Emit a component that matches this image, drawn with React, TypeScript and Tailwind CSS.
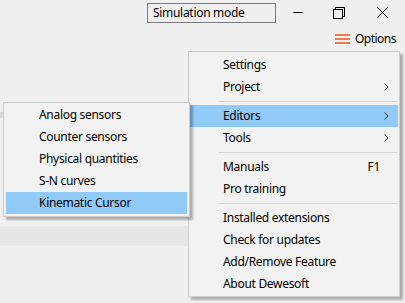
import { ReactNode } from 'react';

type Item = { label: string; arrow?: boolean; shortcut?: string; active?: boolean } | 'sep';

const mainItems: Item[] = [
  { label: 'Settings' },
  { label: 'Project', arrow: true },
  'sep',
  { label: 'Editors', arrow: true, active: true },
  { label: 'Tools', arrow: true },
  'sep',
  { label: 'Manuals', shortcut: 'F1' },
  { label: 'Pro training' },
  'sep',
  { label: 'Installed extensions' },
  { label: 'Check for updates' },
  { label: 'Add/Remove Feature' },
  { label: 'About Dewesoft' },
];

const editorItems: Item[] = [
  { label: 'Analog sensors' },
  { label: 'Counter sensors' },
  { label: 'Physical quantities' },
  { label: 'S-N curves' },
  { label: 'Kinematic Cursor', active: true },
];

function Chevron() {
  return (
    <svg width="5" height="8" viewBox="0 0 5 8" className="text-[#333]">
      <path d="M0.5 0.5 L4 4 L0.5 7.5" fill="none" stroke="currentColor" strokeWidth="1" />
    </svg>
  );
}

function MenuList({ items }: { items: Item[] }) {
  return (
    <>
      {items.map((it, i) =>
        it === 'sep' ? (
          <div key={i} className="h-[7px] flex items-center pl-[29px] pr-[1px]">
            <div className="h-px w-full bg-[#d5d5d5]" />
          </div>
        ) : (
          <div
            key={i}
            className={`h-[22px] flex items-center pl-[33px] pr-[9px] ${it.active ? 'bg-[#91c9f7]' : ''}`}
          >
            <span className="flex-1">{it.label}</span>
            {it.shortcut && <span className="mr-[9px]">{it.shortcut}</span>}
            {it.arrow && <Chevron />}
          </div>
        )
      )}
    </>
  );
}

function Menu({ className, children }: { className: string; children: ReactNode }) {
  return (
    <div
      className={`absolute bg-[#f2f2f2] border border-[#cccccc] shadow-[3px_3px_2px_rgba(0,0,0,0.28)] text-[12px] tracking-[-0.3px] text-black ${className}`}
    >
      {children}
    </div>
  );
}

export default function App() {
  return (
    <div
      className="relative w-[405px] h-[303px] overflow-hidden bg-[#f0f0f0]"
      style={{ fontFamily: '"Noto Sans", "Open Sans", sans-serif' }}
    >
      {/* Title bar */}
      <div className="flex items-start h-[26px]">
        <div className="ml-[147px] mt-[3px] w-[129px] h-[20px] border border-[#7a7a7a] flex items-center pl-[5px] text-[12px] tracking-[-0.3px] text-black">
          Simulation mode
        </div>
        {/* minimize */}
        <div className="ml-[17px] mt-[12px] w-[10px] h-px bg-black" />
        {/* restore */}
        <svg className="ml-[30px] mt-[7px]" width="12" height="12" viewBox="0 0 12 12">
          <path d="M2.5 2.5 V0.5 H11.5 V9.5 H9.5" fill="none" stroke="black" strokeWidth="1" />
          <rect x="0.5" y="2.5" width="9" height="9" fill="none" stroke="black" strokeWidth="1" />
        </svg>
        {/* close */}
        <svg className="ml-[32px] mt-[7px]" width="11" height="11" viewBox="0 0 11 11">
          <path d="M0.5 0.5 L10.5 10.5 M10.5 0.5 L0.5 10.5" fill="none" stroke="black" strokeWidth="1" />
        </svg>
      </div>

      {/* Options row */}
      <div className="flex items-center justify-end h-[26px] pr-[9px] text-[12px] tracking-[-0.5px] text-black">
        <div className="flex flex-col gap-[2px] w-[15px] mr-[5px]">
          <div className="h-[2px] bg-[#ee7b4b]" />
          <div className="h-[2px] bg-[#ee7b4b]" />
          <div className="h-[2px] bg-[#ee7b4b]" />
        </div>
        <span>Options</span>
      </div>

      {/* Background strips */}
      <div className="mt-[60px] h-[6px] w-[6px] bg-[#d8d8d8]" />
      <div className="mt-[108px] h-[20px] w-[188px] bg-[#e6e6e6]" />

      {/* Main menu */}
      <Menu className="left-[188px] top-[51px] w-[212px] pt-[2px] pb-px px-px">
        <MenuList items={mainItems} />
      </Menu>

      {/* Editors submenu */}
      <Menu className="left-[3px] top-[102px] w-[187px] pt-[1px] pb-[2px] px-[2px]">
        <MenuList items={editorItems} />
      </Menu>
    </div>
  );
}
